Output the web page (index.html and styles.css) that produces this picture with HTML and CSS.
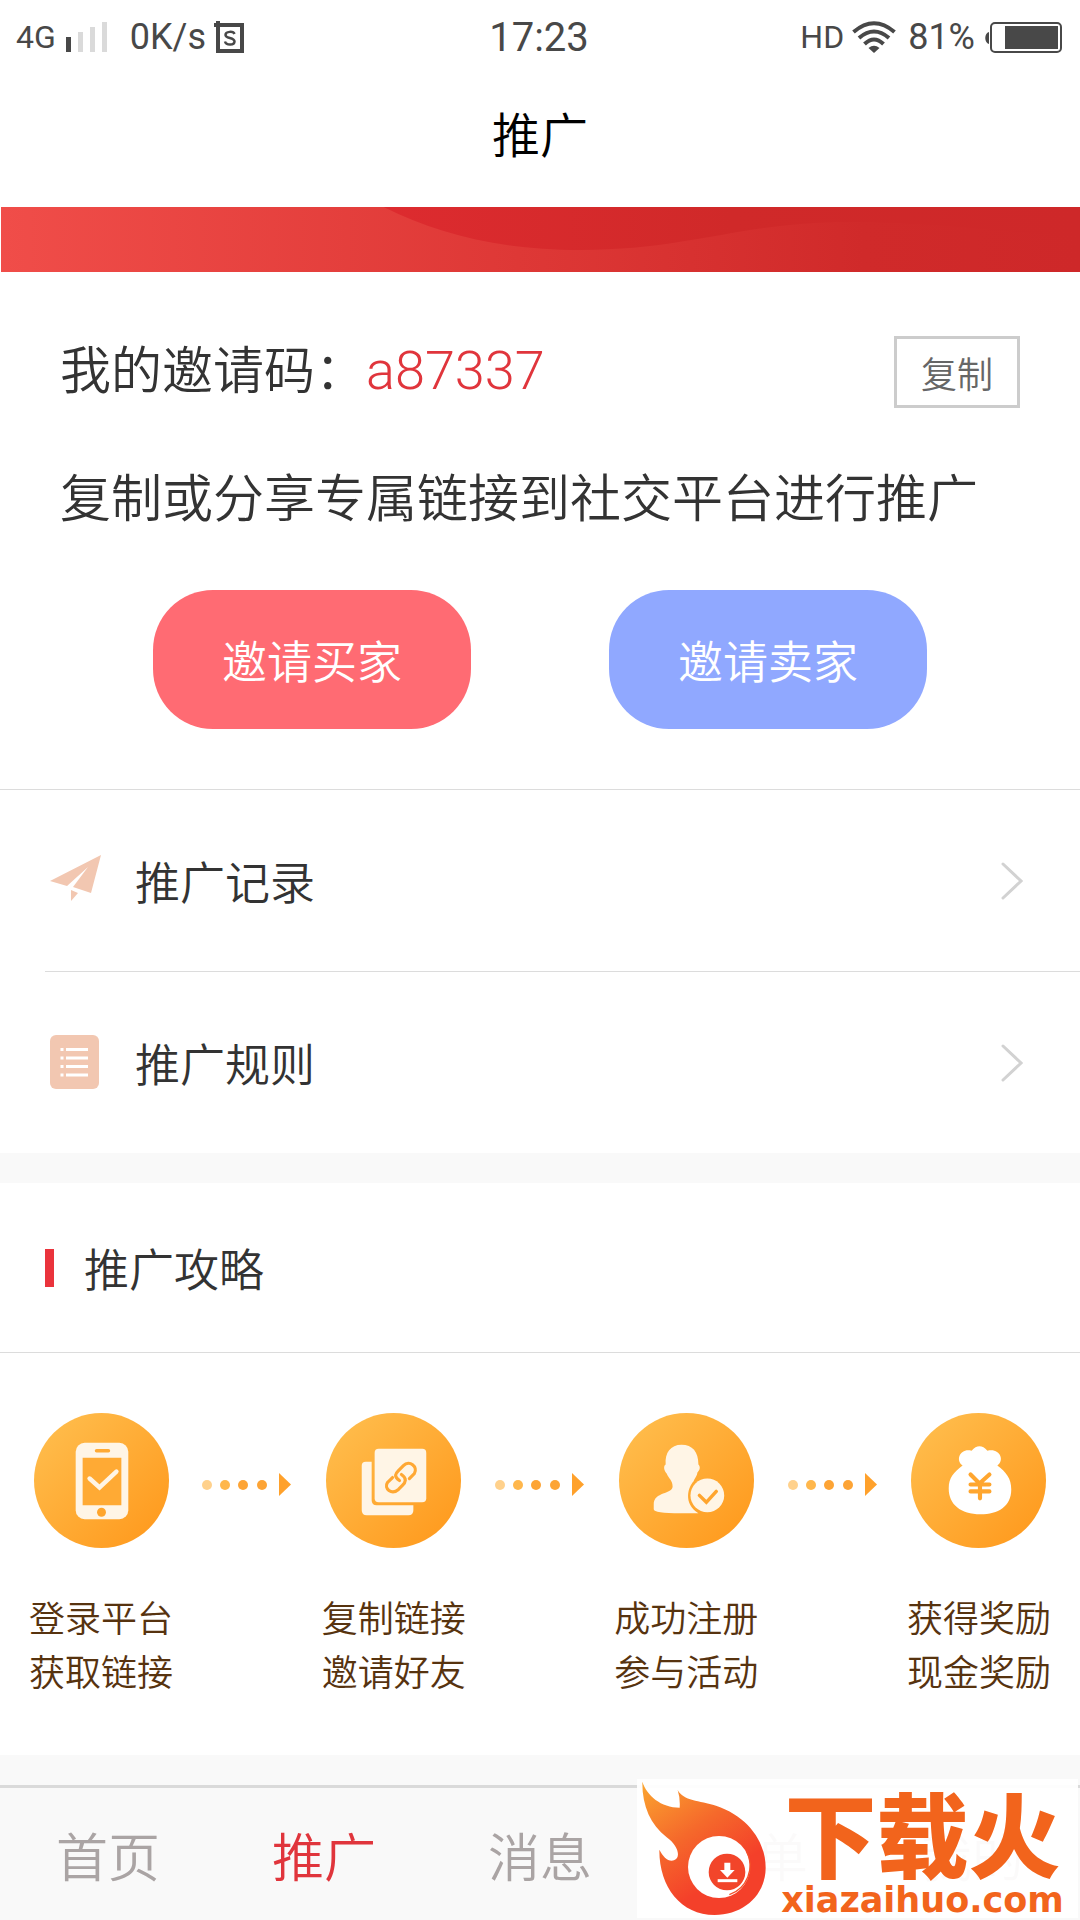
FILE: index.html
```html
<!DOCTYPE html>
<html lang="zh-CN">
<head>
<meta charset="utf-8">
<meta name="viewport" content="width=device-width, initial-scale=1">
<title>推广</title>
<link rel="stylesheet" href="styles.css">
</head>
<body>
<svg class="defs" width="0" height="0" aria-hidden="true">
  <defs>
    <linearGradient id="orange" x1="0" y1="0" x2="1" y2="1">
      <stop offset="0.1" stop-color="#ffbc4b"/><stop offset="0.9" stop-color="#ff9b1f"/>
    </linearGradient>
    <symbol id="dots" viewBox="0 0 90 24">
      <circle cx="5" cy="12" r="5" fill="#ffd18c"/>
      <circle cx="23" cy="12" r="5" fill="#ffb74c"/>
      <circle cx="41" cy="12" r="5" fill="#fda435"/>
      <circle cx="60" cy="12" r="5" fill="#fda435"/>
      <path d="M77 0 89 11.500 77 23Z" fill="#ffa12b"/>
    </symbol>
  </defs>
</svg>

<div class="status">
  <div class="status-side">
    <span class="net">4G</span>
    <svg class="signal" width="42" height="30" viewBox="0 0 42 30" aria-hidden="true">
      <path d="M0 15h5v15H0z" fill="#484848"/>
      <path d="M12 10h5v20h-5zM24 5h5v25h-5zM36 0h5v30h-5z" fill="#dadada"/>
    </svg>
    <span class="rate">0K/s</span>
    <svg class="sbox" width="30" height="32" viewBox="0 0 30 32" aria-hidden="true">
      <path d="M0 4H28V30H4V0" fill="none" stroke="#484848" stroke-width="4"/>
      <path d="M20.500 13c-1-3-9-3-9 1 0 4 9 2 9 6.500 0 4-8.500 4-9.500 0" fill="none" stroke="#484848" stroke-width="2.500"/>
    </svg>
  </div>
  <span class="clock">17:23</span>
  <div class="status-side status-right">
    <span class="net">HD</span>
    <svg class="wifi" width="44" height="32" viewBox="0 0 44 32" aria-hidden="true">
      <g fill="none" stroke="#484848" stroke-width="4">
        <path d="M1.500 11Q22-6.500 42.500 11"/><path d="M7 17Q22 4 37 17"/><path d="M12.500 23Q22 14 31.500 23"/>
      </g>
      <path d="M16.500 27Q22 22.500 27.500 27L22 32Z" fill="#484848"/>
    </svg>
    <span class="rate">81%</span>
    <svg class="battery" width="77" height="31" viewBox="0 0 77 31" aria-hidden="true">
      <path d="M4 10v12C-1 21-1 11 4 10Z" fill="#484848"/>
      <rect x="6" y="1" width="70" height="29" rx="4" fill="none" stroke="#484848" stroke-width="2"/>
      <path d="M20 4h53v23H20z" fill="#484848"/>
    </svg>
  </div>
</div>

<header class="titlebar"><h1>推广</h1></header>

<svg class="banner" viewBox="0 0 1080 65" preserveAspectRatio="none" aria-hidden="true">
  <defs>
    <linearGradient id="red" x1="0" x2="1"><stop offset="0" stop-color="#f04d49"/><stop offset="0.48" stop-color="#de3836"/><stop offset="0.8" stop-color="#d02a2a"/><stop offset="1" stop-color="#ce2829"/></linearGradient>
    <linearGradient id="wave" x1="0" x2="1"><stop offset="0" stop-color="#dd2b2f"/><stop offset="0.5" stop-color="#d02929"/><stop offset="1" stop-color="#ce2829"/></linearGradient>
  </defs>
  <path d="M0 0H1080V65H0Z" fill="url(#red)"/>
  <path d="M383 0C440 28 500 43 580 43C690 43 740 15 850 15C930 15 1000 25 1080 30V0Z" fill="url(#wave)"/>
</svg>

<main>
  <section class="invite">
    <div class="code-row">
      <p class="lead">我的邀请码：<span class="code">a87337</span></p>
      <button class="copy" type="button">复制</button>
    </div>
    <p class="lead">复制或分享专属链接到社交平台进行推广</p>
    <div class="actions">
      <button class="pill buyer" type="button">邀请买家</button>
      <button class="pill seller" type="button">邀请卖家</button>
    </div>
  </section>

  <nav class="links">
    <a class="link" href="#records">
      <svg width="52" height="56" viewBox="0 0 52 56" aria-hidden="true">
        <path d="M1 28 52 2 42 40 24 34 39 14 18 33ZM22 37 29 40 22 48Z" fill="#f2c7b1"/>
      </svg>
      <span>推广记录</span>
      <svg class="chevron" width="22" height="38" viewBox="0 0 22 38" aria-hidden="true"><path d="M2 2 20 19 2 36"/></svg>
    </a>
    <a class="link" href="#rules">
      <svg width="52" height="56" viewBox="0 0 52 56" aria-hidden="true">
        <rect x="1" y="0" width="49" height="54" rx="6" fill="#f2c7b1"/>
        <path d="M17 14.500h22M17 23h22M17 31.500h22M17 40h22M11.500 14.500h3M11.500 23h3M11.500 31.500h3M11.500 40h3" stroke="#fff" stroke-width="3"/>
      </svg>
      <span>推广规则</span>
      <svg class="chevron" width="22" height="38" viewBox="0 0 22 38" aria-hidden="true"><path d="M2 2 20 19 2 36"/></svg>
    </a>
  </nav>

  <section class="guide">
    <h2>推广攻略</h2>
    <div class="steps">
      <div class="step">
        <svg width="135" height="135" viewBox="0 0 136 136" aria-hidden="true">
          <circle cx="68" cy="68" r="68" fill="url(#orange)"/>
          <rect x="42" y="30" width="53" height="77" rx="9" fill="#fff5e6"/>
          <path d="M49 45h39v48H49z" fill="#ffaa34"/>
          <path d="M63 38h12" stroke="#ffaa34" stroke-width="3.500" stroke-linecap="round"/>
          <circle cx="68" cy="100" r="4.500" fill="#ffa52c"/>
          <path d="M56 66 66 75 83 59" fill="none" stroke="#fff5e6" stroke-width="4.500" stroke-linecap="round"/>
        </svg>
        <p>登录平台<br>获取链接</p>
      </div>
      <svg class="dots" width="90" height="24" aria-hidden="true"><use href="#dots"/></svg>
      <div class="step">
        <svg width="135" height="135" viewBox="0 0 136 136" aria-hidden="true">
          <circle cx="68" cy="68" r="68" fill="url(#orange)"/>
          <path d="M46 49h-6q-4 0-4 4v45q0 5 5 5h42q5 0 5-5v-5H51q-5 0-5-5Z" fill="#fff5e6"/>
          <rect x="49" y="36" width="52" height="54" rx="4" fill="#fff5e6"/>
          <g fill="none" stroke="#ffa834" stroke-width="3.200" stroke-linecap="round">
            <path d="M74 68C68 64 70 61 73 58L78 53C84 47 93 54 89 61L84 66"/>
            <path d="M76 62C82 66 80 70 77 73L73 77C66 83 58 76 62 70L67 65"/>
          </g>
        </svg>
        <p>复制链接<br>邀请好友</p>
      </div>
      <svg class="dots" width="90" height="24" aria-hidden="true"><use href="#dots"/></svg>
      <div class="step">
        <svg width="135" height="135" viewBox="0 0 136 136" aria-hidden="true">
          <circle cx="68" cy="68" r="68" fill="url(#orange)"/>
          <path d="M63 32C52 32 46 40 47 52C44 54 46 59 48 61C50 66 54 68 54 74C54 82 35 79 35 92V97Q35 101 62 101H80C64 91 70 74 75 69C76 66 79 63 79 60C82 57 82 54 80 52C80 39 74 32 63 32Z" fill="#fff5e6"/>
          <circle cx="89" cy="83" r="17" fill="#fff5e6"/>
          <path d="M81 83 88 90 98 79" fill="none" stroke="#ffa52e" stroke-width="3.500" stroke-linecap="round"/>
        </svg>
        <p>成功注册<br>参与活动</p>
      </div>
      <svg class="dots" width="90" height="24" aria-hidden="true"><use href="#dots"/></svg>
      <div class="step">
        <svg width="135" height="135" viewBox="0 0 136 136" aria-hidden="true">
          <circle cx="68" cy="68" r="68" fill="url(#orange)"/>
          <path d="M52 53C44 47 50 35 61 38Q69 29 77 38C89 35 95 47 87 53C96 60 101 66 101 77C101 94 88 102 70 102C50 102 38 92 38 76C38 65 43 60 52 53Z" fill="#fff"/>
          <path d="M60 62 69 71 79 62M60 72H79M60 79H79M69.500 71V86" fill="none" stroke="#ffa62f" stroke-width="4.200" stroke-linecap="round"/>
        </svg>
        <p>获得奖励<br>现金奖励</p>
      </div>
    </div>
  </section>
</main>

<footer class="tabs">
  <a href="#home">首页</a>
  <a class="active" href="#promo" aria-current="page">推广</a>
  <a href="#news">消息</a>
  <a href="#orders">订单</a>
  <a href="#me">我的</a>
  <div class="mark">
    <svg width="125" height="135" viewBox="68 122 375 405" aria-hidden="true">
      <defs>
        <linearGradient id="flame" x1="0" y1="0" x2="0.5" y2="0.8"><stop offset="0" stop-color="#fba62f"/><stop offset="0.55" stop-color="#f5692b"/><stop offset="1" stop-color="#f4402a"/></linearGradient>
      </defs>
      <path d="M69 124C82 165 125 202 181 202Q183 174 175 149C192 182 240 180 290 196C384 227 439 302 439 382C439 464 373 524 286 524C184 524 119 439 120 328C132 350 146 365 164 360C187 350 175 315 142 291C93 253 68 195 69 124Z" fill="url(#flame)"/>
      <circle cx="299" cy="380" r="93" fill="#fff"/>
      <path d="M382 333A93 93 0 0 1 330 463" fill="none" stroke="#f4502a" stroke-width="4"/>
      <circle cx="323" cy="395" r="55" fill="#f2452a"/>
      <path d="M315 367h18v22h13L324 412 302 389h13Z" fill="#fff"/>
      <path d="M295 421h59" stroke="#fff" stroke-width="9"/>
    </svg>
    <div class="mark-text">
      <strong>下载火</strong>
      <span>xiazaihuo.com</span>
    </div>
  </div>
</footer>
</body>
</html>
```
FILE: styles.css
```css
* { box-sizing: border-box; }

body {
  margin: 0;
  min-height: 100vh;
  display: flex;
  flex-direction: column;
  background: #f9f9f9;
  color: #333;
  font-family: Roboto, "Noto Sans CJK SC", sans-serif;
  font-weight: 350;
}

h1, h2, p { margin: 0; font-weight: inherit; }
svg { display: block; flex: none; }
a { color: inherit; text-decoration: none; }
button { font: inherit; padding: 0; cursor: pointer; }
.defs { position: absolute; }

.status {
  display: grid;
  grid-template-columns: 1fr auto 1fr;
  align-items: center;
  height: 72px;
  padding: 2px 18px 0 16px;
  background: #fff;
  color: #484848;
  font-weight: 400;
}
.status-side { display: flex; align-items: center; }
.status-right { justify-content: flex-end; }
.net { font-size: 32px; }
.rate { font-size: 36px; }
.clock { font-size: 40px; }
.signal { margin: 0 22px 0 10px; }
.sbox { margin-left: 8px; }
.wifi { margin: 0 12px 0 8px; }
.battery { margin-left: 10px; }

.titlebar {
  display: grid;
  place-items: center;
  height: 135px;
  padding-bottom: 6px;
  background: #fff;
  color: #000;
}
h1 { font-size: 48px; line-height: 72px; }

.banner {
  width: 100%;
  height: 65px;
  border-left: 1px solid #fff;
}

.invite {
  padding: 62px 60px 60px;
  background: #fff;
  border-bottom: 1px solid #dcdcdc;
}
.code-row {
  display: flex;
  align-items: center;
  justify-content: space-between;
  margin-bottom: 52px;
}
.lead { font-size: 51px; line-height: 76px; white-space: nowrap; }
.code { font-size: 54px; line-height: 1; color: #e0353c; }
.copy {
  width: 126px;
  height: 72px;
  background: #fff;
  border: 3px solid #ccc;
  color: #666;
  font-size: 36px;
}
.actions {
  display: flex;
  justify-content: center;
  gap: 138px;
  margin-top: 52px;
}
.pill {
  width: 318px;
  height: 139px;
  border: 0;
  border-radius: 60px;
  color: #fff;
  font-size: 45px;
}
.buyer { background: #ff6b73; }
.seller { background: #90a8ff; }

.links { background: #fff; padding-left: 45px; }
.link {
  box-sizing: content-box;
  display: flex;
  align-items: center;
  gap: 34px;
  height: 181px;
  padding: 0 57px 0 4px;
  font-size: 45px;
}
.link + .link { border-top: 1px solid #dcdcdc; }
.chevron {
  margin-left: auto;
  fill: none;
  stroke: #d2d2d2;
  stroke-width: 3;
  stroke-linecap: round;
}

.guide { margin-top: 30px; background: #fff; }
h2 {
  display: flex;
  align-items: center;
  gap: 30px;
  height: 170px;
  padding-left: 45px;
  border-bottom: 1px solid #dcdcdc;
  font-size: 45px;
}
h2::before { content: ""; width: 9px; height: 38px; background: #ea333c; }

.steps {
  display: flex;
  justify-content: space-between;
  padding: 60px 29px 54px;
}
.step {
  display: flex;
  flex-direction: column;
  align-items: center;
  gap: 45px;
  color: #57330f;
  font-size: 36px;
  line-height: 54px;
}
.dots { margin-top: 60px; }

.tabs {
  position: relative;
  display: grid;
  grid-template-columns: repeat(5, 1fr);
  align-items: center;
  justify-items: center;
  height: 135px;
  margin-top: auto;
  border-top: 3px solid #dadada;
  color: #aaa4a4;
  font-size: 52px;
}
.active { color: #e0353c; }

.mark {
  position: absolute;
  right: 2px;
  bottom: 2px;
  display: flex;
  align-items: center;
  width: 441px;
  height: 139px;
  padding-left: 5px;
  background: rgba(255, 255, 255, 0.95);
  color: #f2641c;
}
.mark-text {
  display: flex;
  flex-direction: column;
  align-items: center;
  flex: 1;
  padding-top: 18px;
}
.mark strong { font-size: 92px; font-weight: 900; line-height: 84px; }
.mark span {
  font: bold 35px/36px "DejaVu Sans", sans-serif;
}
```
